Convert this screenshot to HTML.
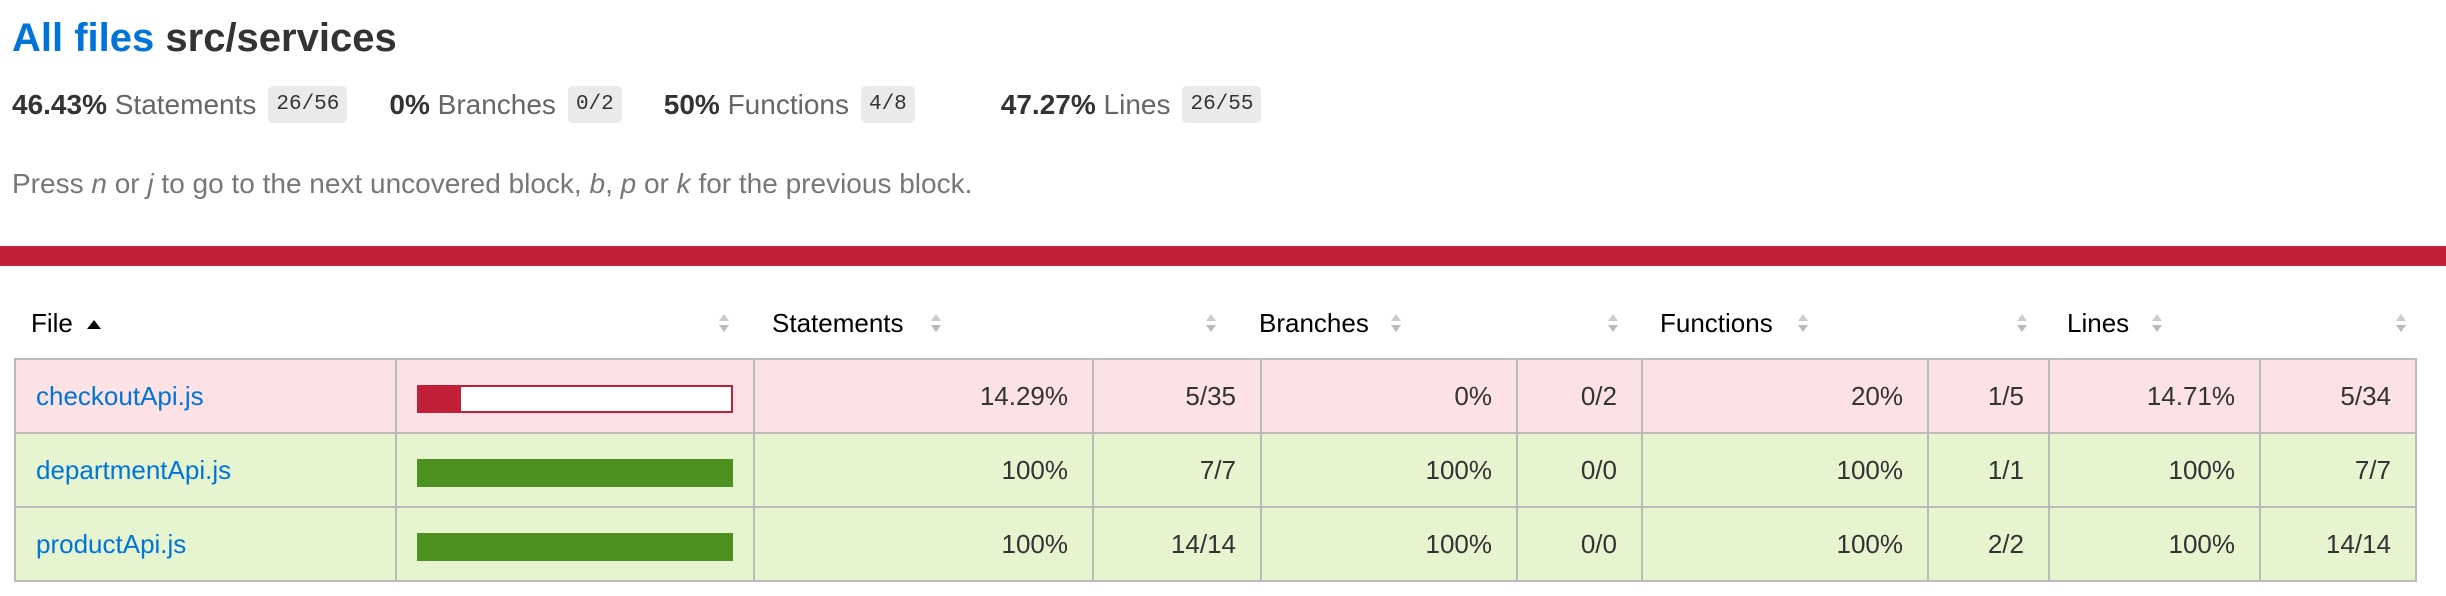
<!DOCTYPE html>
<html><head><meta charset="utf-8"><style>
*{margin:0;padding:0;box-sizing:border-box}
body{width:2446px;height:596px;background:#fff;font-family:"Liberation Sans",Helvetica,Arial,sans-serif;color:#333;position:relative;overflow:hidden}
.a{position:absolute;white-space:nowrap}
h1{position:absolute;left:12px;top:14px;font-size:40px;font-weight:bold;color:#333;line-height:48px}
h1 span{color:#0074D9}
.stats{position:absolute;left:12px;top:86px;height:37px;white-space:nowrap;font-size:28px;color:#666;line-height:37px}
.stats b{color:#333}
.grp{display:inline-block;margin-right:42px}
.badge{display:inline-block;vertical-align:top;height:37px;line-height:37px;background:#eaeaea;border-radius:5px;font-family:"Liberation Mono",monospace;font-size:21px;color:#333;padding:0 8px;margin-left:12px}
.press{left:12px;top:166px;font-size:28px;color:#777;line-height:36px}
.bar{position:absolute;left:0;top:246px;width:2446px;height:20px;background:#C21F39}
.h{position:absolute;top:306px;font-size:26px;line-height:34px;color:#000}
.ar{position:absolute;top:312px;width:12px;height:22px}
table{position:absolute;left:14px;top:358px;border-collapse:collapse;font-size:26px}
td{border:2px solid #bbb;height:74px;text-align:right;padding-right:24px;color:#333}
td.f{text-align:left;padding-left:20px}
td.f a{color:#0074D9;text-decoration:none}
tr.low td{background:#FCE1E5}
tr.high td{background:#E6F5D0}
.pic{position:relative;padding:0}
.pb{position:absolute;left:20px;top:25px;width:316px;height:28px}
</style></head><body>
<h1><span>All files</span> src/services</h1>
<div class="stats"><span class="grp"><b>46.43%</b> Statements<span class="badge">26/56</span></span><span class="grp" style="margin-right:42px"><b>0%</b> Branches<span class="badge">0/2</span></span><span class="grp" style="margin-right:86px"><b>50%</b> Functions<span class="badge">4/8</span></span><span class="grp"><b>47.27%</b> Lines<span class="badge">26/55</span></span></div>
<div class="a press">Press <i>n</i> or <i>j</i> to go to the next uncovered block, <i>b</i>, <i>p</i> or <i>k</i> for the previous block.</div>
<div class="bar"></div>

<div class="h" style="left:31px">File <svg width="16" height="12" viewBox="0 0 16 12" style="margin-left:6px;vertical-align:2px"><path d="M1 11 L8 2 L15 11Z" fill="#000"/></svg></div>
<div class="h" style="left:772px">Statements</div>
<div class="h" style="left:1259px">Branches</div>
<div class="h" style="left:1660px">Functions</div>
<div class="h" style="left:2067px">Lines</div>
<svg class="ar" style="left:718px" viewBox="0 0 12 22"><path d="M1 9L6 2L11 9Z" fill="#ccc"/><path d="M1 13L6 20L11 13Z" fill="#bbb"/></svg>
<svg class="ar" style="left:930px" viewBox="0 0 12 22"><path d="M1 9L6 2L11 9Z" fill="#ccc"/><path d="M1 13L6 20L11 13Z" fill="#bbb"/></svg>
<svg class="ar" style="left:1205px" viewBox="0 0 12 22"><path d="M1 9L6 2L11 9Z" fill="#ccc"/><path d="M1 13L6 20L11 13Z" fill="#bbb"/></svg>
<svg class="ar" style="left:1390px" viewBox="0 0 12 22"><path d="M1 9L6 2L11 9Z" fill="#ccc"/><path d="M1 13L6 20L11 13Z" fill="#bbb"/></svg>
<svg class="ar" style="left:1607px" viewBox="0 0 12 22"><path d="M1 9L6 2L11 9Z" fill="#ccc"/><path d="M1 13L6 20L11 13Z" fill="#bbb"/></svg>
<svg class="ar" style="left:1797px" viewBox="0 0 12 22"><path d="M1 9L6 2L11 9Z" fill="#ccc"/><path d="M1 13L6 20L11 13Z" fill="#bbb"/></svg>
<svg class="ar" style="left:2016px" viewBox="0 0 12 22"><path d="M1 9L6 2L11 9Z" fill="#ccc"/><path d="M1 13L6 20L11 13Z" fill="#bbb"/></svg>
<svg class="ar" style="left:2151px" viewBox="0 0 12 22"><path d="M1 9L6 2L11 9Z" fill="#ccc"/><path d="M1 13L6 20L11 13Z" fill="#bbb"/></svg>
<svg class="ar" style="left:2395px" viewBox="0 0 12 22"><path d="M1 9L6 2L11 9Z" fill="#ccc"/><path d="M1 13L6 20L11 13Z" fill="#bbb"/></svg>

<table>
<colgroup><col style="width:381px"><col style="width:358px"><col style="width:339px"><col style="width:168px"><col style="width:256px"><col style="width:125px"><col style="width:286px"><col style="width:121px"><col style="width:211px"><col style="width:156px"></colgroup>
<tr class="low"><td class="f"><a>checkoutApi.js</a></td><td class="pic"><div class="pb" style="background:#fff;border:2px solid #C21F39"><div style="position:absolute;left:-2px;top:-2px;width:44px;height:28px;background:#C21F39"></div></div></td><td>14.29%</td><td>5/35</td><td>0%</td><td>0/2</td><td>20%</td><td>1/5</td><td>14.71%</td><td>5/34</td></tr>
<tr class="high"><td class="f"><a>departmentApi.js</a></td><td class="pic"><div class="pb" style="background:#4D9221"></div></td><td>100%</td><td>7/7</td><td>100%</td><td>0/0</td><td>100%</td><td>1/1</td><td>100%</td><td>7/7</td></tr>
<tr class="high"><td class="f"><a>productApi.js</a></td><td class="pic"><div class="pb" style="background:#4D9221"></div></td><td>100%</td><td>14/14</td><td>100%</td><td>0/0</td><td>100%</td><td>2/2</td><td>100%</td><td>14/14</td></tr>
</table>
</body></html>
